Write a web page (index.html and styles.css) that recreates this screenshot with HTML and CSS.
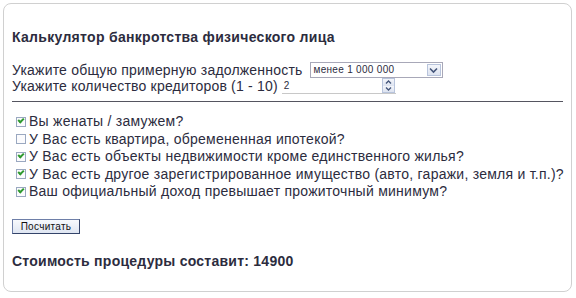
FILE: index.html
```html
<!DOCTYPE html>
<html lang="ru">
<head>
<meta charset="utf-8">
<link rel="stylesheet" href="styles.css">
</head>
<body>
<div class="box">
  <h3 class="title">Калькулятор банкротства физического лица</h3>
  <div class="row first">
    <span>Укажите общую примерную задолженность</span>
    <span class="select"><span class="select-val">менее 1 000 000</span><span class="select-btn"><svg width="9" height="7" viewBox="0 0 9 7"><path d="M1 1.5 L4.5 5 L8 1.5" fill="none" stroke="#44557a" stroke-width="1.6"/></svg></span></span>
  </div>
  <div class="row">
    <span>Укажите количество кредиторов (1 - 10)</span>
    <span class="num"><span class="num-val">2</span><span class="spin"><span class="spin-b"><svg width="7" height="4" viewBox="0 0 7 4"><path d="M1 3.5 L3.5 1 L6 3.5" fill="none" stroke="#44557a" stroke-width="1.3"/></svg></span><span class="spin-b"><svg width="7" height="4" viewBox="0 0 7 4"><path d="M1 0.5 L3.5 3 L6 0.5" fill="none" stroke="#44557a" stroke-width="1.3"/></svg></span></span></span>
  </div>
  <div class="rule"></div>
  <ul class="checks">
    <li><span class="cb on"></span>Вы женаты / замужем?</li>
    <li><span class="cb"></span>У Вас есть квартира, обремененная ипотекой?</li>
    <li><span class="cb on"></span>У Вас есть объекты недвижимости кроме единственного жилья?</li>
    <li><span class="cb on"></span>У Вас есть другое зарегистрированное имущество (авто, гаражи, земля и т.п.)?</li>
    <li><span class="cb on"></span>Ваш официальный доход превышает прожиточный минимум?</li>
  </ul>
  <div class="btn">Посчитать</div>
  <div class="result">Стоимость процедуры составит: 14900</div>
</div>
</body>
</html>
```

FILE: styles.css
```css
html, body {
  margin: 0;
  padding: 0;
  background: #ffffff;
}
body {
  font-family: "Liberation Sans", Arial, sans-serif;
  color: #2c2c3e;
  font-size: 14px;
}
.box {
  margin: 3px 4px 0 3px;
  height: 289px;
  border: 1px solid #d0d0d0;
  border-radius: 8px;
  padding: 0 0 0 8px;
  box-sizing: border-box;
}
.title {
  margin: 25px 0 0 0;
  font-size: 14px;
  font-weight: bold;
  line-height: 17px;
  letter-spacing: 0.3px;
}
.row {
  display: flex;
  align-items: center;
  height: 16px;
  line-height: 16px;
  letter-spacing: 0.2px;
}
.row.first { margin-top: 16px; }
.select {
  margin-left: 7px;
  width: 133px;
  height: 16px;
  border: 1px solid #a8a8b8;
  box-sizing: border-box;
  display: flex;
  align-items: center;
  font-size: 10px;
  letter-spacing: 0.3px;
}
.select-val { flex: 1; padding-left: 3px; }
.select-btn {
  width: 14px;
  height: 12px;
  margin-right: 1px;
  border: 1px solid #b8c4dc;
  box-sizing: border-box;
  background: linear-gradient(#f4f6fb, #dde3f0);
  display: flex;
  align-items: center;
  justify-content: center;
}
.num {
  margin-left: 4px;
  width: 114px;
  height: 15px;
  border-bottom: 1px solid #c8c8c8;
  display: flex;
  align-items: center;
  font-size: 10px;
}
.num-val { flex: 1; padding-left: 2px; }
.spin {
  display: flex;
  flex-direction: column;
  width: 11px;
  height: 13px;
  border: 1px solid #b8c4dc;
  margin-right: 1px;
}
.spin-b {
  flex: 1;
  background: linear-gradient(#f4f6fb, #dde3f0);
  display: flex;
  align-items: center;
  justify-content: center;
}
.rule {
  margin: 7px 8px 0 0;
  height: 1px;
  background: #555560;
}
.checks {
  list-style: none;
  margin: 11px 0 0 0;
  padding: 0;
  letter-spacing: 0.25px;
}
.checks li {
  display: flex;
  align-items: center;
  height: 17.5px;
  line-height: 17.5px;
}
.cb {
  width: 8px;
  height: 8px;
  border: 1px solid #9aa8c0;
  margin: 0 3px 0 4px;
  background: #fbfbfd;
  position: relative;
  flex: none;
}
.cb.on::after {
  content: "";
  position: absolute;
  left: 1px;
  top: 0px;
  width: 4px;
  height: 2px;
  border-left: 2px solid #2f9a2f;
  border-bottom: 2px solid #2f9a2f;
  transform: rotate(-45deg);
  transform-origin: center;
}
.btn {
  margin: 18px 0 0 0;
  width: 68px;
  height: 15px;
  box-sizing: border-box;
  border: 1px solid #6e7fa8;
  border-right-color: #34446a;
  border-bottom-color: #34446a;
  background: linear-gradient(#f7f9fd, #dfe6f2);
  font-size: 10px;
  line-height: 13px;
  text-align: center;
  color: #111;
  letter-spacing: 0.3px;
}
.result {
  margin-top: 19px;
  font-weight: bold;
  font-size: 14px;
  line-height: 17px;
  letter-spacing: 0.25px;
}
```
